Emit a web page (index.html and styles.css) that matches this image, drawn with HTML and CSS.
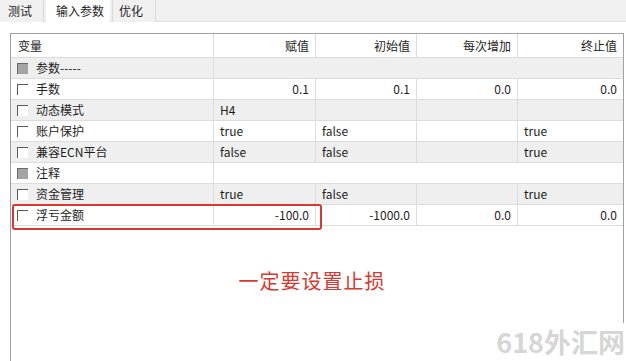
FILE: index.html
```html
<!DOCTYPE html>
<html lang="zh">
<head>
<meta charset="utf-8">
<link rel="stylesheet" href="styles.css">
</head>
<body>
<div class="tabs">
  <div class="tab t1">测试</div>
  <div class="tab active">输入参数</div>
  <div class="tab t3">优化</div>
</div>
<div class="panel">
  <div class="table">
    <div class="row head">
      <div class="c first">变量</div>
      <div class="c num">赋值</div>
      <div class="c num">初始值</div>
      <div class="c num">每次增加</div>
      <div class="c num last">终止值</div>
    </div>
    <div class="row gray group">
      <div class="c first"><span class="cb filled"></span>参数-----</div>
      <div class="c span"></div>
    </div>
    <div class="row">
      <div class="c first"><span class="cb"></span>手数</div>
      <div class="c num">0.1</div>
      <div class="c num">0.1</div>
      <div class="c num">0.0</div>
      <div class="c num last">0.0</div>
    </div>
    <div class="row gray">
      <div class="c first"><span class="cb"></span>动态模式</div>
      <div class="c">H4</div>
      <div class="c"></div>
      <div class="c"></div>
      <div class="c last"></div>
    </div>
    <div class="row">
      <div class="c first"><span class="cb"></span>账户保护</div>
      <div class="c">true</div>
      <div class="c">false</div>
      <div class="c"></div>
      <div class="c last">true</div>
    </div>
    <div class="row gray">
      <div class="c first"><span class="cb"></span>兼容ECN平台</div>
      <div class="c">false</div>
      <div class="c">false</div>
      <div class="c"></div>
      <div class="c last">true</div>
    </div>
    <div class="row group">
      <div class="c first"><span class="cb filled"></span>注释</div>
      <div class="c span"></div>
    </div>
    <div class="row gray">
      <div class="c first"><span class="cb"></span>资金管理</div>
      <div class="c">true</div>
      <div class="c">false</div>
      <div class="c"></div>
      <div class="c last">true</div>
    </div>
    <div class="row marked">
      <div class="c first"><span class="cb"></span>浮亏金额</div>
      <div class="c num">-100.0</div>
      <div class="c num">-1000.0</div>
      <div class="c num">0.0</div>
      <div class="c num last">0.0</div>
      <div class="highlight"></div>
    </div>
    <div class="note">一定要设置止损</div>
  </div>
</div>
<div class="watermark">618外汇网</div>
</body>
</html>
```
FILE: styles.css
```css
html, body {
  margin: 0;
  padding: 0;
  background: #ffffff;
  height: 361px;
  overflow: hidden;
}
body {
  font-family: "Noto Sans CJK SC", "Noto Sans", sans-serif;
  font-size: 12px;
  color: #1e1e1e;
  position: relative;
}
.tabs {
  display: flex;
  height: 22px;
  background: #f0f0f0;
  border-bottom: 1px solid #e2e2e2;
  box-sizing: border-box;
}
.tab {
  height: 22px;
  line-height: 21px;
  box-sizing: border-box;
  padding: 0 8px;
  background: #f0f0f0;
  color: #1e1e1e;
  white-space: nowrap;
}
.tab.t1 {
  width: 44px;
  border-right: 1px solid #dadada;
}
.tab.active {
  background: #ffffff;
  width: 64px;
  padding: 0 0 0 10px;
  height: 23px;
  margin-left: 2px;
}
.tab.t3 {
  width: 44px;
  margin-left: 2px;
  border-left: 1px solid #dadada;
  border-right: 1px solid #dadada;
  padding-left: 6px;
}
.panel {
  padding: 11px 2px 0 10px;
  height: 339px;
  box-sizing: border-box;
}
.table {
  border: 1px solid #a0a0a0;
  border-bottom: none;
  height: 100%;
  box-sizing: border-box;
}
.row {
  display: grid;
  grid-template-columns: 203px 102px 101px 101px 1fr;
  height: 21px;
  border-bottom: 1px solid #dcdcdc;
  box-sizing: border-box;
  background: #ffffff;
}
.row.gray {
  background: #efefef;
}
.row.head {
  height: 24px;
  border-bottom: 1px solid #dcdcdc;
}
.row.group {
  grid-template-columns: 203px 1fr;
}
.c {
  border-right: 1px solid #dcdcdc;
  line-height: 20px;
  padding: 0 6px;
  white-space: nowrap;
  overflow: hidden;
}
.head .c {
  line-height: 23px;
}
.c.last, .c.span {
  border-right: none;
}
.c.num {
  text-align: right;
  padding-right: 6px;
}
.c.first {
  display: flex;
  align-items: center;
  padding-left: 6px;
}
.head .c.first {
  padding-left: 7px;
}
.cb {
  width: 11px;
  height: 11px;
  box-sizing: border-box;
  border-top: 1px solid #5a5a5a;
  border-left: 1px solid #5a5a5a;
  background: #ffffff;
  margin-right: 8px;
  flex: none;
}
.cb.filled {
  background: #a4a4a4;
  border-top-color: #6a6a6a;
  border-left-color: #6a6a6a;
}
.row.marked {
  position: relative;
}
.highlight {
  position: absolute;
  left: 1px;
  top: -1px;
  width: 310px;
  height: 26px;
  box-sizing: border-box;
  border: 2.5px solid #d8392f;
  border-radius: 3px;
}
.note {
  text-align: center;
  color: #d8392f;
  font-size: 20px;
  letter-spacing: 1px;
  margin-top: 40px;
  padding-right: 10px;
  line-height: 30px;
}
.watermark {
  position: absolute;
  right: 1px;
  bottom: 0;
  background: #ffffff;
  color: #d6d6d6;
  font-family: "Noto Sans CJK SC", sans-serif;
  font-size: 27px;
  font-weight: 700;
  line-height: 38px;
  padding-left: 4px;
}
```
